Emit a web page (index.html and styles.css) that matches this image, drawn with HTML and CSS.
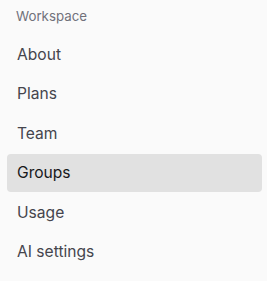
FILE: index.html
```html
<!DOCTYPE html>
<html>
<head>
<meta charset="utf-8">
<link rel="stylesheet" href="styles.css">
</head>
<body>
<nav class="sidebar">
  <div class="section-title">Workspace</div>
  <ul class="menu">
    <li class="item">About</li>
    <li class="item">Plans</li>
    <li class="item">Team</li>
    <li class="item active">Groups</li>
    <li class="item">Usage</li>
    <li class="item">AI settings</li>
  </ul>
</nav>
</body>
</html>
```
FILE: styles.css
```css
html, body {
  margin: 0;
  padding: 0;
  background: #fafafa;
  font-family: Inter, "Noto Sans", sans-serif;
}
.sidebar {
  width: 267px;
  height: 281px;
  box-sizing: border-box;
  padding: 0 5px 0 7px;
}
.section-title {
  height: 35px;
  box-sizing: border-box;
  padding: 8px 0 0 9px;
  font-size: 13.3px;
  line-height: 16px;
  color: #71717a;
}
.menu {
  list-style: none;
  margin: 0;
  padding: 0;
  display: flex;
  flex-direction: column;
  gap: 1.6px;
}
.item {
  height: 38px;
  display: flex;
  align-items: center;
  padding-left: 10px;
  border-radius: 4px;
  font-size: 15.6px;
  color: #45454d;
}
.item.active {
  background: #e1e1e1;
  color: #18181b;
}
```
